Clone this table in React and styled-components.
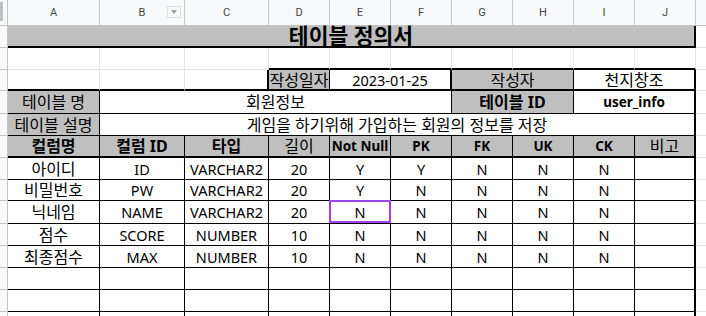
import styled, { createGlobalStyle, css } from "styled-components";

const GlobalStyle = createGlobalStyle`
    html, body {
        margin: 0;
        padding: 0;
        background: #ffffff;
        overflow: hidden;
    }
`;

const COLS = [8, 92, 85, 84, 61, 61, 61, 61, 61, 61, 61, 10];
const LETTERS = ["A", "B", "C", "D", "E", "F", "G", "H", "I", "J", ""];

const GRID = "1px solid #e2e3e3";
const THIN = "1px solid #000000";
const THICK = "2px solid #000000";
const LINES = { grid: GRID, thin: THIN, thick: THICK, none: "none" };

const HANGUL = /[\uac00-\ud7a3]/;

// one entry per sheet row: height, then the cells of A..J
const rows = [
    { h: 22, cells: [{ span: 10, text: "테이블 정의서", fill: true, title: true, b: "thick", r: "thick" }] },
    {
        h: 22,
        cells: [
            {}, {}, {},
            { b: "thick" }, { b: "thick" }, { b: "thick" }, { b: "thick" },
            { b: "thick" }, { b: "thick" }, { b: "thick" },
        ],
    },
    {
        h: 21,
        cells: [
            { b: "thick" }, { b: "thick" }, { b: "thick", r: "thick" },
            { text: "작성일자", fill: true, b: "thick", r: "thin" },
            { span: 2, text: "2023-01-25", b: "thick", r: "thick" },
            { span: 2, text: "작성자", fill: true, b: "thick", r: "thin" },
            { span: 2, text: "천지창조", b: "thick", r: "thick" },
        ],
    },
    {
        h: 23,
        cells: [
            { text: "테이블 명", fill: true, b: "thin", r: "thin" },
            { span: 5, text: "회원정보", b: "thin", r: "thin" },
            { span: 2, text: "테이블 ID", fill: true, bold: true, b: "thin", r: "thin" },
            { span: 2, text: "user_info", bold: true, b: "thin", r: "thick" },
        ],
    },
    {
        h: 22,
        cells: [
            { text: "테이블 설명", fill: true, b: "thin", r: "thin" },
            { span: 9, text: "게임을 하기위해 가입하는 회원의 정보를 저장", b: "thin", r: "thick" },
        ],
    },
    {
        h: 22,
        head: [
            ["컬럼명", true], ["컬럼 ID", true], ["타입", true], ["길이", false], ["Not Null", true],
            ["PK", true], ["FK", true], ["UK", true], ["CK", true], ["비고", false],
        ],
    },
    { h: 22, data: ["아이디", "ID", "VARCHAR2", "20", "Y", "Y", "N", "N", "N", ""] },
    { h: 21, data: ["비밀번호", "PW", "VARCHAR2", "20", "Y", "N", "N", "N", "N", ""] },
    { h: 23, data: ["닉네임", "NAME", "VARCHAR2", "20", "N", "N", "N", "N", "N", ""], pick: 4 },
    { h: 22, data: ["점수", "SCORE", "NUMBER", "10", "N", "N", "N", "N", "N", ""] },
    { h: 22, data: ["최종점수", "MAX", "NUMBER", "10", "N", "N", "N", "N", "N", ""] },
    { h: 22, data: ["", "", "", "", "", "", "", "", "", ""] },
    { h: 22, data: ["", "", "", "", "", "", "", "", "", ""] },
    { h: 22, data: ["", "", "", "", "", "", "", "", "", ""] },
];

function expand(row) {
    if (row.cells) return row.cells;
    if (row.head) {
        return row.head.map(([text, bold], i) => ({
            text, bold, fill: true, b: "thick", r: i === 9 ? "thick" : "thin",
        }));
    }
    return row.data.map((text, i) => ({
        text, b: "thin", r: i === 9 ? "thick" : "thin", picked: row.pick === i,
    }));
}

function textSize(c, ko) {
    if (c.title) return "21.5px";
    if (ko) return "16px";
    return c.bold ? "13.5px" : "14.5px";
}

export default function App() {
    return (
        <>
            <GlobalStyle />
            <Sheet>
                <Table>
                    <colgroup>
                        {COLS.map((w, i) => <col key={i} style={{ width: w }} />)}
                    </colgroup>
                    <thead>
                        <tr>
                            <Corner><FreezeBar /></Corner>
                            {LETTERS.map((l, i) => (
                                <ColHead key={i}>
                                    {l}
                                    {l === "B" && <FilterButton />}
                                </ColHead>
                            ))}
                        </tr>
                    </thead>
                    <tbody>
                        {rows.map((row, ri) => (
                            <tr key={ri} style={{ height: row.h }}>
                                <RowHead />
                                {expand(row).map((c, ci) => (
                                    <Cell
                                        key={ci}
                                        colSpan={c.span || 1}
                                        $fill={c.fill}
                                        $bold={c.bold || c.title}
                                        $title={c.title}
                                        $size={textSize(c, HANGUL.test(c.text || ""))}
                                        $r={c.r || "grid"}
                                        $b={c.b || "grid"}
                                        $picked={c.picked}
                                    >
                                        {c.text}
                                    </Cell>
                                ))}
                                <Cell $r="none" $b="grid" $size="14px" />
                            </tr>
                        ))}
                    </tbody>
                </Table>
            </Sheet>
        </>
    );
}

const Sheet = styled.div`
    width: 706px;
    height: 316px;
    overflow: hidden;
    background: #ffffff;
`;

const Table = styled.table`
    border-collapse: separate;
    border-spacing: 0;
    table-layout: fixed;
    width: 706px;
`;

const ColHead = styled.th`
    position: relative;
    height: 26px;
    box-sizing: border-box;
    padding: 0;
    background: #f8f9fa;
    border-right: 1px solid #c7c7c7;
    border-bottom: 1px solid #c4c4c4;
    font-family: Roboto, "Liberation Sans", sans-serif;
    font-size: 11px;
    font-weight: 400;
    color: #444746;
    text-align: center;
    vertical-align: middle;
    &:last-child {
        border-right: none;
    }
`;

const Corner = styled(ColHead)`
    border-right: 1px solid #c4c4c4;
`;

const FreezeBar = styled.span`
    position: absolute;
    left: 0;
    top: 2px;
    width: 3px;
    height: 19px;
    background: #c0c0c0;
`;

const FilterButton = styled.span`
    position: absolute;
    left: 67px;
    top: 6px;
    width: 12px;
    height: 10px;
    border: 1px solid #e0e0e0;
    &::after {
        content: "";
        position: absolute;
        left: 3px;
        top: 3px;
        border-left: 3px solid transparent;
        border-right: 3px solid transparent;
        border-top: 4px solid #a0a0a0;
    }
`;

const RowHead = styled.td`
    padding: 0;
    background: #f8f9fa;
    border-right: 1px solid #c4c4c4;
    border-bottom: 1px solid #c4c4c4;
`;

const Cell = styled.td`
    position: relative;
    padding: 0;
    box-sizing: border-box;
    background: ${(p) => (p.$fill ? "#bfbfbf" : "#ffffff")};
    border-right: ${(p) => LINES[p.$r]};
    border-bottom: ${(p) => LINES[p.$b]};
    font-family: "Noto Sans", "Noto Sans CJK KR", sans-serif;
    font-size: ${(p) => p.$size};
    font-weight: ${(p) => (p.$bold ? 700 : 400)};
    line-height: ${(p) => (p.$title ? "20px" : "18px")};
    color: #000000;
    text-align: center;
    vertical-align: middle;
    white-space: nowrap;
    overflow: ${(p) => (p.$title ? "visible" : "hidden")};
    ${(p) => p.$picked && css`
        overflow: visible;
        &::after {
            content: "";
            position: absolute;
            left: -1px;
            top: -1px;
            right: -1px;
            bottom: 0;
            border: 2px solid #9a45e8;
        }
    `}
`;
